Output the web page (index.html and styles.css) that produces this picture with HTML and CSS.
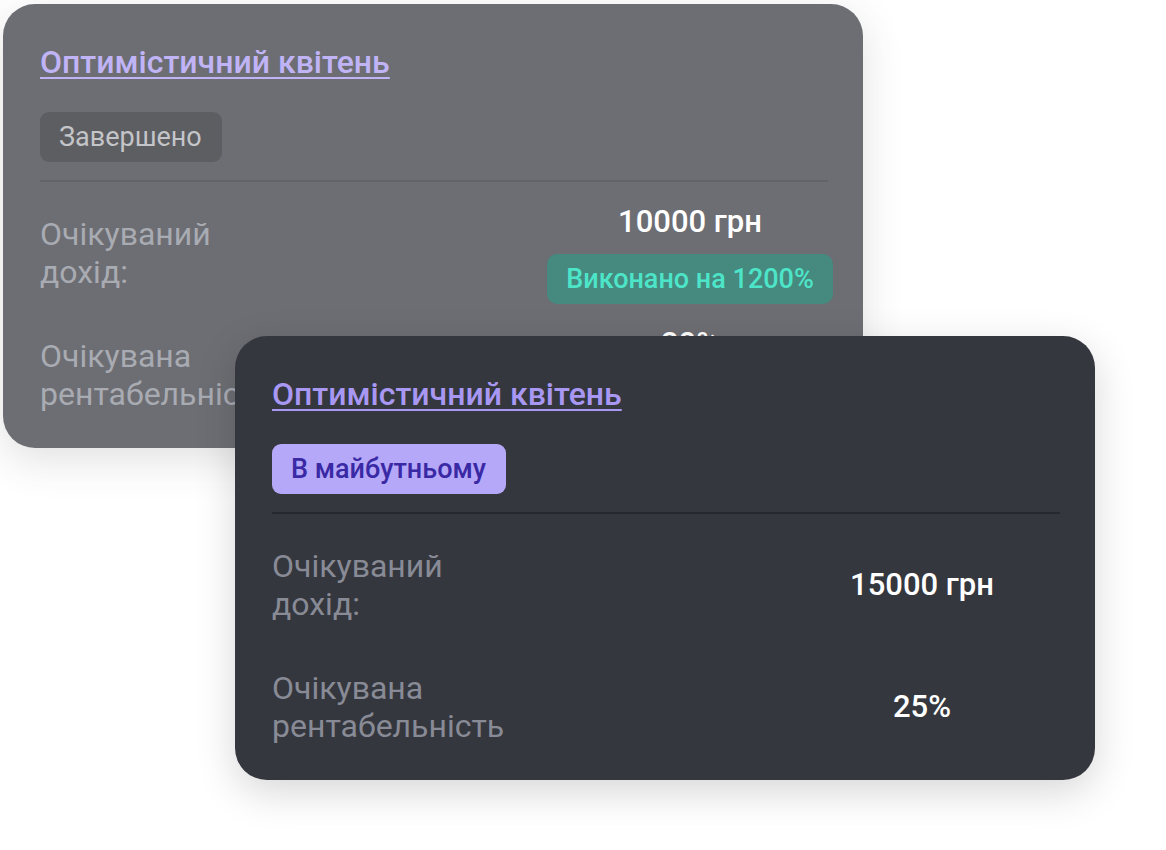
FILE: index.html
```html
<!DOCTYPE html>
<html lang="uk">
<head>
<meta charset="utf-8">
<title>Плани</title>
<link rel="stylesheet" href="styles.css">
</head>
<body>
<div class="stage">
  <article class="card card--past">
    <a class="card__title" href="#">Оптимістичний квітень</a>
    <div class="card__status status--done">Завершено</div>
    <div class="card__divider"></div>
    <div class="card__rows">
      <div class="row">
        <div class="row__label">Очікуваний дохід:</div>
        <div class="row__value">
          <span class="row__amount">10000 грн</span>
          <span class="chip chip--success">Виконано на 1200%</span>
        </div>
      </div>
      <div class="row">
        <div class="row__label">Очікувана рентабельність</div>
        <div class="row__value">
          <span class="row__amount">20%</span>
          <span class="chip chip--success">Виконано на 150%</span>
        </div>
      </div>
    </div>
  </article>

  <article class="card card--future">
    <a class="card__title" href="#">Оптимістичний квітень</a>
    <div class="card__status status--future">В майбутньому</div>
    <div class="card__divider"></div>
    <div class="card__rows">
      <div class="row">
        <div class="row__label">Очікуваний дохід:</div>
        <div class="row__value">
          <span class="row__amount">15000 грн</span>
        </div>
      </div>
      <div class="row">
        <div class="row__label">Очікувана рентабельність</div>
        <div class="row__value">
          <span class="row__amount">25%</span>
        </div>
      </div>
    </div>
  </article>
</div>
</body>
</html>
```

FILE: styles.css
```css
* { box-sizing: border-box; }

html, body {
  margin: 0;
  padding: 0;
  background: #ffffff;
}

body {
  font-family: Roboto, "Noto Sans", "DejaVu Sans", sans-serif;
  color: #ffffff;
}

.stage {
  position: relative;
  width: 1166px;
  height: 850px;
  overflow: hidden;
}

.card {
  width: 860px;
  background: #35373e;
  border-radius: 32px;
  padding: 41px 35px 22px 37px;
  display: flex;
  flex-direction: column;
  align-items: flex-start;
  box-shadow: 0 12px 40px rgba(0, 0, 0, 0.16);
}

.card--past {
  margin: 4px 0 0 3px;
  opacity: 0.72;
}

.card--future {
  position: absolute;
  left: 235px;
  top: 336px;
}

.card__title {
  font-size: 32px;
  line-height: 34px;
  font-weight: 500;
  color: #a898f3;
  text-decoration: underline;
  text-decoration-thickness: 2px;
  text-underline-offset: 4px;
}

.card__status {
  margin-top: 33px;
  height: 50px;
  line-height: 50px;
  padding: 0 20px 0 19px;
  border-radius: 9px;
  font-size: 27px;
}

.status--done {
  background: #1f2126;
  color: #aeafb5;
  font-weight: 400;
}

.status--future {
  background: #b5a8f8;
  color: #3a29a5;
  font-weight: 500;
}

.card__divider {
  align-self: stretch;
  height: 2px;
  margin-top: 18px;
  background: #26282d;
}

.card__rows {
  align-self: stretch;
  margin-top: 20px;
  display: flex;
  flex-direction: column;
  gap: 20px;
}

.row {
  min-height: 102px;
  display: flex;
  align-items: center;
  justify-content: space-between;
}

.row__label {
  width: 240px;
  font-size: 32px;
  line-height: 38px;
  color: #888b96;
}

.row__value {
  width: 276px;
  display: flex;
  flex-direction: column;
  align-items: center;
  gap: 12px;
}

.row__amount {
  font-size: 31px;
  line-height: 40px;
  font-weight: 500;
  color: #ffffff;
  white-space: nowrap;
}

.chip {
  flex: none;
  height: 50px;
  line-height: 50px;
  padding: 0 19px;
  border-radius: 10px;
  font-size: 27px;
  font-weight: 500;
  white-space: nowrap;
}

.chip--success {
  background: #005c4f;
  color: #0adcb4;
}
```
